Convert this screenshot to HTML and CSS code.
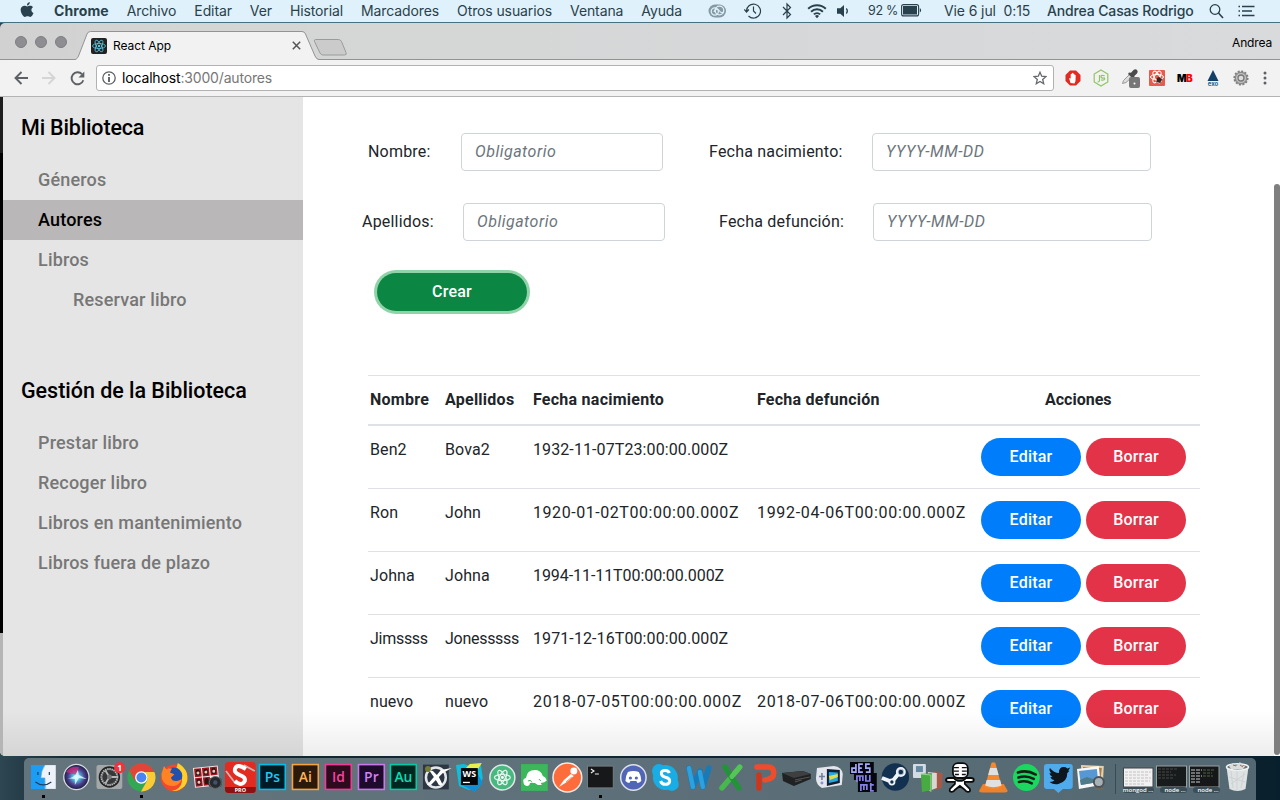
FILE: index.html
```html
<!DOCTYPE html>
<html lang="es">
<head>
<meta charset="utf-8">
<title>React App</title>
<link rel="stylesheet" href="styles.css">
</head>
<body>
<div class="desktop">
  <header class="menubar">
    <svg class="apple" width="14" height="16" viewBox="0 0 14 16"><path d="M9.8 0c.1 1.800-1.200 3.300-2.800 3.400C6.800 1.800 8.200.3 9.800 0zM7.200 4.500c.8 0 1.700-.8 3.100-.7 1 0 2 .5 2.700 1.400-2.400 1.500-2 4.700.5 5.700-.6 1.700-2 4-3.300 4-1 0-1.500-.6-2.700-.6s-1.700.6-2.600.6C3.100 15-.2 9.400.9 6.300 1.500 4.700 2.900 3.800 4.300 3.800c1.200 0 2 .7 2.900.7z" fill="#29414c"/></svg>
    <nav class="menus"><b>Chrome</b><span>Archivo</span><span>Editar</span><span>Ver</span><span>Historial</span><span>Marcadores</span><span>Otros usuarios</span><span>Ventana</span><span>Ayuda</span></nav>
    <div class="tray">
      <svg class="cloud" width="19" height="16" viewBox="0 0 19 16"><rect x=".5" y="1.500" width="17.500" height="13" rx="6.500" fill="#849aa4"/><g fill="none" stroke="#dff1fa" stroke-width="1.200"><circle cx="6.800" cy="8.500" r="3.600"/><circle cx="11.500" cy="7.500" r="4.300"/><path d="M6 9c1.500-4.500 4-3 5.500-1s2.500 2.200 3.500 1"/></g></svg>
      <svg class="clockback" width="18" height="18" viewBox="0 0 18 18"><path d="M2.500 9.500A7 7 0 1 1 4.500 14M9.500 4.500V9l2.500 2.500M.300 7.500 2.500 10l2.400-2.500" fill="none" stroke="#29414c" stroke-width="1.200"/></svg>
      <svg class="bt" width="10" height="18" viewBox="0 0 10 18"><path d="m1 5 7.500 7.500L5 16V2l3.500 3.500L1 13" fill="none" stroke="#29414c" stroke-width="1.200"/></svg>
      <svg class="wifi" width="20" height="16" viewBox="0 0 20 16"><g fill="none" stroke="#29414c" stroke-width="2"><path d="M1.200 5.800a12.500 12.500 0 0 1 17.600 0M4.100 8.700a8.500 8.500 0 0 1 11.800 0M6.900 11.400a4.500 4.500 0 0 1 6.200 0"/></g><path d="M10 15.300 8 13a3 3 0 0 1 4 0z" fill="#29414c"/></svg>
      <svg class="vol" width="12" height="14" viewBox="0 0 12 14"><path d="M0 4.300h3.300L7 1v12L3.300 9.700H0z" fill="#29414c"/><path d="M9.300 4.500a4 4 0 0 1 0 5" fill="none" stroke="#29414c" stroke-width="1.300"/></svg>
      <span class="pct">92 %</span>
      <svg class="battery" width="21" height="13" viewBox="0 0 21 13"><rect x=".6" y=".6" width="17" height="11.300" rx="2" fill="none" stroke="#29414c" stroke-width="1.100"/><rect x="2" y="2" width="14" height="8.500" fill="#29414c"/><path d="M18.800 4.200c1.700.5 1.700 3.600 0 4.200z" fill="#29414c"/></svg>
      <span class="clock">Vie 6 jul&nbsp; 0:15</span>
      <span class="user">Andrea Casas Rodrigo</span>
      <svg class="search" width="15" height="16" viewBox="0 0 15 16"><circle cx="6" cy="6.500" r="4.800" fill="none" stroke="#29414c" stroke-width="1.300"/><path d="m9.500 10 4.500 5" stroke="#29414c" stroke-width="1.600"/></svg>
      <svg class="list" width="17" height="12" viewBox="0 0 17 12"><path d="M4 1.500h12.500M4 6h10M4 10.500h12.500M.5 1.500H2M.5 6H2M.5 10.500H2" stroke="#29414c" stroke-width="1.700"/></svg>
    </div>
  </header>

  <section class="browser">
    <div class="tabstrip">
      <div class="lights"><i></i><i></i><i></i></div>
      <div class="tab">
        <svg class="tab-shape" width="246" height="29" viewBox="0 0 246 29"><path d="M0 28.500C2 28 2.500 27 3.500 25L12 3Q13 .5 15.500.5H227Q229.500.5 230.500 3L240 25q1.500 3.500 4 3.500V29H0z" fill="#f2f2f2"/><path d="M0 28.500C2 28 2.500 27 3.500 25L12 3Q13 .5 15.500.5H227Q229.500.5 230.500 3L240 25q1.500 3.500 4 3.500" fill="none" stroke="#939393"/></svg>
        <svg class="favicon" width="16" height="16" viewBox="0 0 16 16"><rect width="16" height="16" rx="2" fill="#222"/><g fill="none" stroke="#5ac8e6" stroke-width=".8"><ellipse cx="8" cy="8" rx="6.500" ry="2.500"/><ellipse cx="8" cy="8" rx="6.500" ry="2.500" transform="rotate(60 8 8)"/><ellipse cx="8" cy="8" rx="6.500" ry="2.500" transform="rotate(120 8 8)"/></g><circle cx="8" cy="8" r="1.200" fill="#5ac8e6"/></svg>
        <span class="tab-title">React App</span>
        <svg class="close" width="9" height="9" viewBox="0 0 9 9"><path d="m.8.8 7.400 7.400m0-7.400L.8 8.200" stroke="#555" stroke-width="1.500"/></svg>
      </div>
      <svg class="newtab" width="35" height="17" viewBox="0 0 35 17"><path d="M2.500.5h23q2 0 3 2l4.500 11q1 2.500-1.500 2.500H10q-2 0-3-2L1.500 2.500Q.800.500 2.500.5z" fill="#cbcbcb" stroke="#9a9a9a"/></svg>
      <span class="profile">Andrea</span>
    </div>
    <div class="toolbar">
      <svg width="14" height="14" viewBox="0 0 14 14"><path d="M14 7H1.500M7.500 1 1.500 7l6 6" fill="none" stroke="#5d6064" stroke-width="1.900"/></svg>
      <svg class="fwd" width="14" height="14" viewBox="0 0 14 14"><path d="M0 7h12.500M6.500 1l6 6-6 6" fill="none" stroke="#d5d5d5" stroke-width="1.900"/></svg>
      <svg class="reload" width="15" height="15" viewBox="0 0 15 15"><path d="M12 3.200a6 6 0 1 0 1.300 6" fill="none" stroke="#5d6064" stroke-width="1.900"/><path d="M14.300.5v6H8.500z" fill="#5d6064"/></svg>
      <div class="omnibox">
        <svg width="14" height="14" viewBox="0 0 14 14"><circle cx="7" cy="7" r="6.200" fill="none" stroke="#5d6064" stroke-width="1.300"/><path d="M7 3v1.800M7 6v5" stroke="#5d6064" stroke-width="1.900"/></svg>
        <span class="url"><b>localhost</b>:3000/autores</span>
        <svg class="star" width="14" height="14" viewBox="0 0 14 14"><path d="m7 1.200 1.700 4 4.300.4-3.300 2.800 1 4.300L7 10.400l-3.700 2.300 1-4.300L1 5.600l4.300-.4z" fill="none" stroke="#66696d" stroke-width="1.300"/></svg>
      </div>
      <div class="extensions">
        <svg width="16" height="16" viewBox="0 0 16 16"><path d="M5 .5h6L15.500 5v6L11 15.500H5L.5 11V5z" fill="#e32a22"/><path d="M5.500 13 4.200 8.500q.7-1 1.500.3V4.300q.7-.9 1.200 0V3.300q.7-.9 1.300 0v.7q.7-.8 1.200 0v1.100q.8-.8 1.300.3L10.500 11 9.500 13.500z" fill="#fff"/></svg>
        <svg width="16" height="18" viewBox="0 0 16 18"><path d="m8 1 6.800 4v8L8 17l-6.800-4V5z" fill="none" stroke="#8cc665" stroke-width="1.200"/><path d="M6.500 6v5.500q0 1.500-2 1.500M11.700 6.800Q8 5.500 8 7.500t3.500 1.500q1 2.500-3.500 2" fill="none" stroke="#8cc665" stroke-width="1.200"/></svg>
        <svg class="picker" width="19" height="20" viewBox="0 0 19 20"><path d="m1.500 15.500 1-3L9 6l2.500 2.500-6.500 6z" fill="#ddd" stroke="#999"/><path d="m8 4.500 2 .3L12.500 2q2-1.500 3.500 0t0 3.500L13.300 8l.4 2-1.500 1L7 6z" fill="#4b4b4b"/><rect x="8" y="9" width="11" height="11" rx="2" fill="#777"/><circle cx="13.500" cy="15.500" r="1" fill="#fff"/></svg>
        <svg width="16" height="16" viewBox="0 0 16 16"><rect width="16" height="16" rx="1" fill="#e65b4c"/><g fill="none" stroke="#fff"><ellipse cx="8" cy="7" rx="6.500" ry="2.600"/><ellipse cx="8" cy="7" rx="6.500" ry="2.600" transform="rotate(60 8 7)"/><ellipse cx="8" cy="7" rx="6.500" ry="2.600" transform="rotate(120 8 7)"/></g><path d="m8 8.500 3-1 1.500 2.500-2 2.500-2.500-1zM7 12l6-3M9 7l2.500 6" fill="#37231f" stroke="#37231f" stroke-width=".8"/></svg>
        <span class="mb">M<em>B</em></span>
        <svg width="16" height="18" viewBox="0 0 16 18"><path d="m8 1 5.500 11h-11z" fill="#153e64"/><text x="8" y="17" text-anchor="middle" class="exo">exo</text></svg>
        <svg width="16" height="16" viewBox="0 0 16 16"><circle cx="8" cy="8" r="6.600" fill="#aaa" stroke="#808080" stroke-width="2" stroke-dasharray="2 1.450"/><circle cx="8" cy="8" r="5.500" fill="#c4c4c4" stroke="#777" stroke-width=".7"/><circle cx="8" cy="8" r="3" fill="#ddd" stroke="#777" stroke-width="1.300"/></svg>
      </div>
      <svg class="dots" width="4" height="14" viewBox="0 0 4 14"><g fill="#5d6064"><circle cx="2" cy="2" r="1.500"/><circle cx="2" cy="7" r="1.500"/><circle cx="2" cy="12" r="1.500"/></g></svg>
    </div>

    <div class="page">
      <div class="behind"></div>
      <aside class="sidebar">
        <h2>Mi Biblioteca</h2>
        <ul><li>Géneros</li><li class="active">Autores</li><li>Libros</li><li class="sub">Reservar libro</li></ul>
        <h2 class="second">Gestión de la Biblioteca</h2>
        <ul><li>Prestar libro</li><li>Recoger libro</li><li>Libros en mantenimiento</li><li>Libros fuera de plazo</li></ul>
      </aside>
      <main class="content">
        <form class="form">
          <div class="row row-1"><label>Nombre:</label><input type="text" placeholder="Obligatorio"><label>Fecha nacimiento:</label><input class="date" type="text" placeholder="YYYY-MM-DD"></div>
          <div class="row row-2"><label>Apellidos:</label><input type="text" placeholder="Obligatorio"><label>Fecha defunción:</label><input class="date" type="text" placeholder="YYYY-MM-DD"></div>
          <button type="button" class="btn create">Crear</button>
        </form>
        <div class="table">
          <div class="tr th"><span>Nombre</span><span>Apellidos</span><span>Fecha nacimiento</span><span>Fecha defunción</span><span class="acc">Acciones</span></div>
          <div class="tr"><span>Ben2</span><span>Bova2</span><span>1932-11-07T23:00:00.000Z</span><span></span><span class="actions"><button class="btn edit">Editar</button><button class="btn delete">Borrar</button></span></div>
          <div class="tr"><span>Ron</span><span>John</span><span class="wide">1920-01-02T00:00:00.000Z</span><span class="wider">1992-04-06T00:00:00.000Z</span><span class="actions"><button class="btn edit">Editar</button><button class="btn delete">Borrar</button></span></div>
          <div class="tr"><span>Johna</span><span>Johna</span><span class="narrow">1994-11-11T00:00:00.000Z</span><span></span><span class="actions"><button class="btn edit">Editar</button><button class="btn delete">Borrar</button></span></div>
          <div class="tr"><span class="narrower">Jimssss</span><span class="narrower">Jonesssss</span><span>1971-12-16T00:00:00.000Z</span><span></span><span class="actions"><button class="btn edit">Editar</button><button class="btn delete">Borrar</button></span></div>
          <div class="tr"><span>nuevo</span><span>nuevo</span><span class="wider">2018-07-05T00:00:00.000Z</span><span class="wider">2018-07-06T00:00:00.000Z</span><span class="actions"><button class="btn edit">Editar</button><button class="btn delete">Borrar</button></span></div>
        </div>
      </main>
      <div class="scrollbar"></div>
      <div class="page-shade"></div>
    </div>
  </section>

  <footer class="dock">
    <svg class="app run" viewBox="0 0 33 34"><path d="M4 5h25v24H4z" fill="#eef3fa"/><path d="M4 5h14q-4 6-4 13h4v11H4z" fill="#1b9df5"/><path d="M18 5q-4 6-4 13h4q0 6 1 11" fill="none" stroke="#5b9fce" stroke-width=".7"/><path d="M8.500 22q8 6 16 0M11 12v3M22.500 12v3" fill="none" stroke="#1d3d5c" stroke-width="1.200"/></svg>
    <svg class="app" viewBox="0 0 33 34"><defs><radialGradient id="siri"><stop offset="0" stop-color="#fff"/><stop offset=".3" stop-color="#52b6d8"/><stop offset=".65" stop-color="#4b3f8e"/><stop offset="1" stop-color="#191c3a"/></radialGradient></defs><circle cx="16.500" cy="17" r="12.700" fill="url(#siri)" stroke="#d9dbe2" stroke-width="1.300"/><path d="M6 12q5-7 13-5l-2 8z" fill="#d92b7b" opacity=".7"/><path d="M5 18q8 1 11-4l2-4 1 5 8 4-8-1-4 7 0-6z" fill="#d7fbff" opacity=".85"/></svg>
    <svg class="app" viewBox="0 0 33 34"><rect x="3.500" y="5" width="26" height="24" rx="2" fill="#a5a8a9"/><circle cx="16.500" cy="17" r="10" fill="#353738" stroke="#222" stroke-width="1.500"/><circle cx="16.500" cy="17" r="8" fill="none" stroke="#b5b7b8" stroke-width="2" stroke-dasharray="1.500 .7"/><path d="M16.500 17H24M16.500 17l-4-6.500M16.500 17l-4 6.500" stroke="#b5b7b8" stroke-width="1.800"/><circle cx="16.500" cy="17" r="2.500" fill="#777"/><circle cx="26.800" cy="7.500" r="5.600" fill="#f0333c"/><text class="glyph" x="26.800" y="10.700" font-size="8.500" fill="#fff">1</text></svg>
    <svg class="app run" viewBox="0 0 33 34"><circle cx="16.500" cy="17.500" r="14" fill="#33a853"/><path d="M4.400 10.500A14 14 0 0 1 29.500 12H16.500L10 21z" fill="#e04538"/><path d="M29.600 12a14 14 0 0 1-13.500 19.500l6-10.500q2-5-2-9z" fill="#fbcb35"/><circle cx="16.500" cy="17.500" r="6.300" fill="#fff"/><circle cx="16.500" cy="17.500" r="5" fill="#4786ee"/></svg>
    <svg class="app" viewBox="0 0 33 34"><circle cx="16.500" cy="18" r="13.500" fill="#f4472b"/><path d="M20 3q7 4 9 10 2 8-2 13-6 6-13 5 9-2 10-9 2-8-6-12z" fill="#ffcf2c"/><circle cx="16" cy="16" r="8.500" fill="#2251ad"/><path d="M3.500 14 6 6l2.500 3.500q3-2 5.500-1l-2 4q3 1 4.500 2l-3.500 3q1 4 6 3.500 3-.5 5-2-2 6-8 7-9 1-12-7z" fill="#ff8324"/></svg>
    <svg class="app" viewBox="0 0 33 34"><g transform="rotate(-6 16 17)"><rect x="3" y="6.500" width="25" height="20" fill="#f4e8e8"/><path d="M4 7.500h7v8.500H4zm8 0h7v8.500h-7zm8 0h7v8.500h-7zM4 17h7v8.500H4zm8 0h7v8.500h-7z" fill="#a4151f"/><path d="M5.500 14.500q-1-6 2-6t2 6zm8 0q-1-6 2-6t2 6zm8 0q-1-6 2-6t2 6zM5.500 24q-1-6 2-6t2 6zm8 0q-1-6 2-6t2 6z" fill="#2a1516"/><circle cx="7.500" cy="12" r="1.500" fill="#f0c4ae"/><circle cx="15.500" cy="12" r="1.500" fill="#f0c4ae"/><circle cx="23.500" cy="12" r="1.500" fill="#f0c4ae"/><circle cx="7.500" cy="21.500" r="1.500" fill="#f0c4ae"/></g><rect x="17.500" y="18" width="13.500" height="9" rx="3" fill="#373b3f"/><circle cx="24.500" cy="22.500" r="6" fill="#252a2e" stroke="#63696d"/><circle cx="24.500" cy="22.500" r="2.200" fill="#47506b"/></svg>
    <svg class="app" viewBox="0 0 33 34"><rect x="1" y="2" width="31" height="31" rx="3.500" fill="#e32b22"/><path d="M1 27h31v3q0 3-3.500 3h-24Q1 33 1 29z" fill="#8d1113"/><path d="m20 5 11 6M2 11l10 13" stroke="#c3b7b5" stroke-width="1.800"/><path d="M22 9q-9-6-11 0-1 4 5 6t5 6q-3 6-10 0" fill="none" stroke="#fff" stroke-width="4"/><text class="glyph" x="16.500" y="32" font-size="5.500" fill="#fff">PRO</text></svg>
    <svg class="app" viewBox="0 0 33 34"><rect x="3.500" y="4.500" width="26" height="25" fill="#001a24" stroke="#00bfe8" stroke-width="1.600"/><text class="glyph adobe" x="16.500" y="22" fill="#1fc9f2">Ps</text></svg>
    <svg class="app" viewBox="0 0 33 34"><rect x="3.500" y="4.500" width="26" height="25" fill="#2b1a0b" stroke="#f4a340" stroke-width="1.600"/><text class="glyph adobe" x="16.500" y="22" fill="#fbb45a">Ai</text></svg>
    <svg class="app" viewBox="0 0 33 34"><rect x="3.500" y="4.500" width="26" height="25" fill="#2d0b1c" stroke="#ef3c96" stroke-width="1.600"/><text class="glyph adobe" x="16.500" y="22" fill="#f643a3">Id</text></svg>
    <svg class="app" viewBox="0 0 33 34"><rect x="3.500" y="4.500" width="26" height="25" fill="#1e0a2b" stroke="#c878ec" stroke-width="1.600"/><text class="glyph adobe" x="16.500" y="22" fill="#d381f5">Pr</text></svg>
    <svg class="app" viewBox="0 0 33 34"><rect x="3.500" y="4.500" width="26" height="25" fill="#012620" stroke="#00cda4" stroke-width="1.600"/><text class="glyph adobe" x="16.500" y="22" fill="#0bdcb4">Au</text></svg>
    <svg class="app" viewBox="0 0 33 34"><rect x="3" y="4.500" width="26" height="25" fill="#2c3743"/><circle cx="16" cy="17.500" r="10" fill="none" stroke="#e4e7e9" stroke-width="2.500"/><path d="m9 10 4 1 4 4 4-5 11-2-9 5-4 4 4 8h-4l-3-5-5 5H7l7-8z" fill="#fff"/><circle cx="8" cy="9" r="3" fill="#747b37"/></svg>
    <svg class="app" viewBox="0 0 33 34"><path d="m3 5 8-1 6 2 11-2 2 14-4 10-10 2-10-4z" fill="#10bddb"/><path d="m17 4 12-1-5 8-11-3z" fill="#e9ee4d"/><path d="m7 24 18-10 5 9-8 9z" fill="#118fd5"/><rect x="8" y="8" width="17" height="17" fill="#050608"/><text class="glyph" x="16.500" y="17.500" font-size="9" fill="#fff">WS</text><path d="M10 22.500h7" stroke="#fff" stroke-width="1.300"/></svg>
    <svg class="app" viewBox="0 0 33 34"><circle cx="16.500" cy="17.500" r="12.600" fill="#48b880" stroke="#dfe9e5" stroke-width="1.500"/><g fill="none" stroke="#e3f5ec" stroke-width="1.200"><ellipse cx="16.500" cy="17.500" rx="8" ry="3"/><ellipse cx="16.500" cy="17.500" rx="8" ry="3" transform="rotate(62 16.500 17.500)"/><ellipse cx="16.500" cy="17.500" rx="8" ry="3" transform="rotate(118 16.500 17.500)"/></g><circle cx="16.500" cy="17.500" r="1.500" fill="#fff"/></svg>
    <svg class="app" viewBox="0 0 33 34"><rect x="3" y="4" width="27" height="27" fill="#3cb75b"/><path d="M5.500 22q-1-3 2.500-4 1-8 9-8 6 0 8 6 3 1 4 4.500-2 2.500-6 2.500l1 2H20l-3-2h-5q0 3-3 3-3.500-.5-3.500-4z" fill="#fff"/><path d="M10 21q3-2 4 1.500M21 19l2 2" fill="none" stroke="#3cb75b"/></svg>
    <svg class="app" viewBox="0 0 33 34"><circle cx="16.500" cy="17.500" r="14.500" fill="#ff6c3c" stroke="#f4ece8" stroke-width="1.500"/><path d="m8 27 5-7 7-6 3 2-7 6z" fill="#fff"/><path d="m12 20 8-7m-5 9 6-5" stroke="#ff6c3c" stroke-width=".8"/><circle cx="23" cy="11" r="3.500" fill="#fff"/></svg>
    <svg class="app run" viewBox="0 0 33 34"><rect x="3.500" y="6" width="26" height="22" fill="#171819" stroke="#777d80"/><path d="m7 9 3 2-3 2M11 14h4" fill="none" stroke="#eee" stroke-width="1.200"/></svg>
    <svg class="app" viewBox="0 0 33 34"><circle cx="16.500" cy="17.500" r="12.800" fill="#5266b8" stroke="#dce0ed" stroke-width="1.500"/><path d="M11 12q5.500-2 11 0 2.500 4 2.500 9-2 2-4 2l-1-2h-6l-1 2q-2 0-4-2 0-5 2.500-9z" fill="#fff"/><circle cx="13.500" cy="18" r="1.600" fill="#5266b8"/><circle cx="19.500" cy="18" r="1.600" fill="#5266b8"/></svg>
    <svg class="app" viewBox="0 0 33 34"><circle cx="16.500" cy="17.500" r="12.500" fill="#18aee5"/><circle cx="10" cy="11" r="7" fill="#18aee5"/><circle cx="23" cy="24" r="7" fill="#18aee5"/><path d="M20.500 13q-1-3-5-2.500-3.500.5-3 3.300t4 3.400q4.500 1 4.300 4-.5 3.200-4.300 3.200t-4.800-3.400" fill="none" stroke="#fff" stroke-width="3"/></svg>
    <svg class="app" viewBox="0 0 33 34"><path d="m7 8 4 19 7-16 3 16 6-19" fill="none" stroke="#177ab9" stroke-width="5.500" stroke-linejoin="round" stroke-linecap="round"/><path d="m7 8 4 19M18 12l3 15" stroke="#2ba1df" stroke-width="4.500" stroke-linecap="round"/></svg>
    <svg class="app" viewBox="0 0 33 34"><path d="M25 7 7 28" stroke="#47b84c" stroke-width="5.500" stroke-linecap="round"/><path d="m10 7 14 21" stroke="#239339" stroke-width="5.500" stroke-linecap="round"/><path d="m25 7-8 9.500" stroke="#55c557" stroke-width="5" stroke-linecap="round"/></svg>
    <svg class="app" viewBox="0 0 33 34"><path d="M9 7h11q6 0 6 6t-9 7" fill="none" stroke="#ee4c2c" stroke-width="5.500" stroke-linecap="round"/><path d="M11 15v13" stroke="#cf351c" stroke-width="5.500" stroke-linecap="round"/></svg>
    <svg class="app" viewBox="0 0 33 34"><path d="m2 13 21-2 8 3v5L14 26 3 21z" fill="#1f2122"/><path d="m2 13 21-2 8 3-17 4z" fill="#3d3f40"/><path d="m15 20 15-3M15 22l7-2" stroke="#555"/></svg>
    <svg class="app" viewBox="0 0 33 34"><path d="m4 8 17-2q8 1 9 8l-1 11-20 3q-6-3-6-10z" fill="#e4e6ed"/><path d="m14 9 13 1v13l-13 3z" fill="#151d30"/><path d="m16 12 9 .5V21l-9 2z" fill="#22a9e2"/><path d="m16 16 9-2v3l-8 3z" fill="#e7d94f"/><path d="M9 13v7M6 16.500h6" stroke="#777e99" stroke-width="1.600"/><circle cx="9" cy="23" r="1.500" fill="#8992d0"/></svg>
    <svg class="app" viewBox="0 0 33 34"><path d="M4 2h24v11h3v19H12V20H8v-6H4z" fill="#06060d"/><g fill="none" stroke="#a6a9f5" stroke-width="1.700"><path d="M10 4v8H6V8h4M17 4h-4v8h4M13 8h3M24 4h-4v4h4v4h-4"/><path d="M11 22v-6h3v5-5h3v5M20 15v6h4v-6M15 31v-6h3v5-5h3v5M25 23v8h3M24 25h4" stroke="#8581ea"/></g></svg>
    <svg class="app" viewBox="0 0 33 34"><circle cx="16.500" cy="17" r="13.800" fill="#123050"/><path d="m3 18 10 4 8-10" fill="none" stroke="#eef3f8" stroke-width="4"/><circle cx="22" cy="12" r="5" fill="#eef3f8"/><circle cx="22" cy="12" r="2.800" fill="#123050" stroke="#b7c7d6"/><circle cx="13" cy="22" r="3.500" fill="#eef3f8"/><circle cx="13" cy="22" r="1.700" fill="#123050"/></svg>
    <svg class="app" viewBox="0 0 33 34"><rect x="2" y="4" width="13" height="14" rx="1" fill="#d2dce4"/><path d="M5 6h7v6H5z" fill="#6389a5"/><path d="m23 12 9 1-1 15-8 2z" fill="#a75846"/><path d="m17 12 9 1v15l-8 3z" fill="#d7d8d4"/><path d="m10 14 11-1v17l-10 2z" fill="#47aa42"/><path d="m10 14 10 1v17" fill="none" stroke="#9ad28f"/></svg>
    <svg class="app" viewBox="0 0 33 34"><g stroke="#0b0b0b" stroke-width="1.800" fill="#fff"><path d="M5 18q-3 0-3 2t3 2h6v2l-5 5q-1 3 2 3 2 0 3-2l5-4 5 4q1 2 3 2 3 0 2-3l-5-5v-2h6q3 0 3-2t-3-2h-5q-2 3-6 3t-6-3z"/><rect x="9" y="3" width="15" height="15" rx="5"/></g><path d="M10 7.500h5m3 0h5m-13 3.500h5m3 0h5m-12 3.500h4m3 0h4" stroke="#111" stroke-width="1.300"/></svg>
    <svg class="app" viewBox="0 0 33 34"><path d="m6 24-4 7q0 1.500 3 1.500h23q3 0 3-1.500l-4-7z" fill="#f0812b"/><path d="M14.500 3q2-1.500 4 0L25 27q-8.500 4-17 0z" fill="#f4892f"/><path d="M13.200 8h6.600l2 7H11.200zM9.700 20h13.600l1.500 5.500q-8.300 3.500-16.600 0z" fill="#dfe0df"/></svg>
    <svg class="app" viewBox="0 0 33 34"><circle cx="16.500" cy="17.500" r="13.500" fill="#1bd760"/><path d="M8 12.500q9-3 18 2M8.500 17.500q8-2.500 15.500 1.500M9 22q7-2 13 1.500" fill="none" stroke="#122117" stroke-width="2.600" stroke-linecap="round"/></svg>
    <svg class="app" viewBox="0 0 33 34"><path d="M5 4h23q3 0 3 3v19q0 3-3 3h-7l-4.500 4-4.500-4H5q-3 0-3-3V7q0-3 3-3z" fill="#50abed"/><path d="M8 8q4 5 9 5 0-6 5-6 2 0 3.500 1.500l3-1-2 3 1 .5-2 2q0 9-9 11-5 1-9-2 4 0 5-2-3 0-4-3h2q-3-2-3-4l2 .5q-3-3-1.500-5.500z" fill="#0e161e"/></svg>
    <svg class="app" viewBox="0 0 33 34"><path d="m6 5 23 1-1 20-21-2z" fill="#e3d1ad"/><path d="m8 7 19 1-1 9-17-1z" fill="#a57b4b"/><path d="m2 9 22-3 2 19-22 4z" fill="#f6f7f8"/><path d="m4 11 18-2 1.500 13-17.500 3z" fill="#5798d4"/><path d="m5 20 7-3 6 2 5-2 .5 5-17.500 3z" fill="#4f7a8a"/><circle cx="24" cy="22" r="5" fill="#a7b1b5" stroke="#4d5355" stroke-width="2"/><path d="M20 28h9v2h-9z" fill="#6d695f"/></svg>
    <i class="sep"></i>
    <svg class="mini" viewBox="0 0 33 34"><rect x="1.500" y="8" width="29.500" height="19" fill="#f2f0f0" stroke="#3c4548"/><path d="M3 12h26M3 15h24M3 18h26M3 21h25M3 24h20" stroke="#c4c4c4" stroke-dasharray="3 1"/><rect x="1" y="27" width="31" height="6" rx="3" fill="#3b4e58"/><text class="glyph cap" x="16" y="32">mongod ...</text></svg>
    <svg class="mini" viewBox="0 0 33 34"><rect x="1.500" y="6" width="30" height="21" fill="#181b1c" stroke="#99a0a1"/><path d="M3 9h20M3 12h13M3 15h18M3 18h15" stroke="#555" stroke-width=".8" stroke-dasharray="3 1"/><rect x="5" y="27" width="27" height="6" rx="3" fill="#3b4e58"/><text class="glyph cap" x="20" y="32">node ...</text></svg>
    <svg class="mini" viewBox="0 0 33 34"><rect x="1.500" y="6" width="29.500" height="21" fill="#151718" stroke="#99a0a1"/><path d="M3 10h11M3 13h9M3 16h11M3 19h9M3 22h10" stroke="#ccc" stroke-dasharray="4 1"/><path d="M15 10h12M15 13h9M15 16h10" stroke="#536346" stroke-dasharray="3 1"/><rect x="5" y="27" width="27" height="6" rx="3" fill="#3b4e58"/><text class="glyph cap" x="20" y="32">node ...</text></svg>
    <svg class="mini" viewBox="0 0 33 34"><path d="M5.500 7h22l-3 22q-8 4-16 0z" fill="#dfe2e3"/><path d="m10 11 2 17m4-17v19m7-18-3 16M8 17l16 5M24 14 10 24" stroke="#cdd2d4"/><ellipse cx="16.500" cy="7" rx="11" ry="3.300" fill="#6a7474" stroke="#f1f3f3" stroke-width="1.500"/><path d="m8 6 4-3 3 3 4-4 3 4 3-1-3 4H10z" fill="#d9dcdc"/><path d="m12 5 3 1M19 5l3 2" stroke="#b66342"/></svg>
  </footer>
</div>
</body>
</html>
```

FILE: styles.css
```css
* { box-sizing: border-box; }
body { margin: 0; }
svg { display: block; flex: none; }
.desktop {
  width: 1280px; height: 800px; overflow: hidden;
  display: flex; flex-direction: column;
  background: linear-gradient(90deg, #2d4651 0, #142833 6%, #10212c 95%, #08202d 100%);
}

/* System menu bar */
.menubar {
  height: 23px; flex: none; display: flex; align-items: center;
  padding: 0 25px 1px 20px;
  background: #dff1fa; border-bottom: 1px solid #49707f;
  font: 14px Inter, sans-serif; color: #29414c; letter-spacing: -.11px; white-space: nowrap;
}
.apple { margin-top: -1px; }
.menus { display: flex; gap: 18px; margin-left: 20px; }
.menus b { font-weight: 700; letter-spacing: .1px; }
.tray { display: flex; align-items: center; margin-left: auto; }
.cloud { margin-right: 17px; }
.clockback { margin-right: 20px; }
.bt { margin-right: 15px; }
.wifi { margin-right: 10px; }
.vol { margin-right: 19px; }
.pct { font-size: 12.500px; width: 29px; letter-spacing: -.3px; }
.battery { margin: 0 22px 0 4px; }
.clock { width: 86px; margin-right: 17px; }
.user { width: 147px; font-weight: 500; letter-spacing: -.14px; margin-right: 15px; }
.search { margin-right: 14px; }

/* Browser chrome */
.browser { height: 733px; flex: none; overflow: hidden; border-radius: 5px 0 0 5px; }
.tabstrip {
  height: 37px; display: flex; align-items: flex-start;
  background: linear-gradient(90deg, #d1d1d1 0, #d4d5d5 15%, #d8dadb 100%);
  border-bottom: 1px solid #939393;
}
.lights { display: flex; gap: 8px; padding: 13px 0 0 15px; width: 75px; }
.lights i { width: 12px; height: 12px; border-radius: 50%; background: #8e8d91; border: 1px solid #7e7d81; }
.tab { position: relative; width: 239px; height: 29px; margin-top: 8px; display: flex; align-items: center; padding-left: 16px; }
.tab-shape { position: absolute; left: 0; top: 0; }
.favicon, .tab-title, .close { position: relative; }
.tab-title { margin-left: 6px; font: 12px Inter, sans-serif; letter-spacing: -.06px; color: #000; }
.close { margin-left: 121px; }
.newtab { margin: 16px 0 0 -1px; }
.profile { margin: 12px 8px 0 auto; font: 12px Inter, sans-serif; letter-spacing: -.15px; color: #000; }
.toolbar {
  height: 37px; display: flex; align-items: center; padding: 0 13px 0 14px;
  background: #f2f2f2; border-bottom: 1px solid #b3b3b3;
}
.fwd { margin-left: 14px; }
.reload { margin-left: 14px; }
.omnibox {
  width: 958px; height: 26px; margin-left: 11px; padding: 0 6px 0 5px;
  display: flex; align-items: center; flex: none;
  border: 1px solid #b2b2b2; border-radius: 3px; background: #fff;
}
.url { margin: 0 0 2px 6px; font: 14px Inter, sans-serif; color: #777; letter-spacing: -.16px; }
.url b { font-weight: 400; color: #000; }
.star { margin-left: auto; }
.extensions { display: flex; align-items: center; gap: 12px; margin-left: 11px; }
.picker { margin: 0 -3px 0 0; }
.mb { width: 16px; font: 900 10px/16px Inter, sans-serif; letter-spacing: -.6px; color: #000; }
.mb em { font-style: normal; color: #f00; }
.exo { font: 700 6px Inter, sans-serif; fill: #156592; }
.dots { margin-left: auto; }

/* Web page */
.page { position: relative; height: 659px; display: flex; background: #fff; font: 16px Roboto, sans-serif; color: #212529; }
.behind { width: 3px; background: linear-gradient(#1d1d1d 0 56px, #000 56px 536px, #b5b5b5 536px); }
.sidebar { width: 300px; background: #e5e5e5; padding-top: 14px; }
h2 { margin: 0; padding-left: 18px; font-size: 21.500px; line-height: 34px; font-weight: 500; letter-spacing: -.17px; color: #000; }
h2.second { margin-top: 54px; letter-spacing: -.03px; }
ul { margin: 0; padding: 15px 0 0; list-style: none; }
li { height: 40px; padding-left: 35px; font-size: 18px; line-height: 40px; font-weight: 500; letter-spacing: .17px; color: #777; }
li.active { background: #b9b7b7; color: #000; }
li.sub { padding-left: 70px; }
.content { flex: 1; padding: 36px 0 0 65px; }
.form { display: flex; flex-direction: column; align-items: flex-start; height: 242px; }
.row { display: grid; align-items: center; height: 38px; margin-bottom: 32px; letter-spacing: .2px; }
.row-1 { grid-template-columns: 93px 202px 46px 163px 279px; }
.row-2 { grid-template-columns: 101px 202px 54px 154px 279px; margin-left: -6px; }
.row label { padding-bottom: 2px; }
.row label:nth-of-type(2) { grid-column: 4; }
.row .date { grid-column: 5; }
.row input {
  width: 100%; height: 38px; padding: 0 13px 1px;
  border: 1px solid #ced4da; border-radius: 4px; background: #fff;
  font: 16px Roboto, sans-serif; letter-spacing: .5px; color: #495057;
}
.row input::placeholder { color: #6c757d; font-style: italic; opacity: 1; }
.btn {
  width: 100px; height: 38px; border: 0; border-radius: 19px; padding: 0 0 1px;
  font: 500 16px Roboto, sans-serif; letter-spacing: .2px; color: #fff;
}
.create { width: 150px; margin-left: 9px; background: #0c8743; box-shadow: 0 0 0 3px #90d3a8; }
.edit { background: #007dfb; }
.delete { background: #e23348; }
.table { width: 832px; }
.tr {
  height: 63px; display: grid; grid-template-columns: 75px 88px 224px 224px 219px; padding: 12px 0 0 2px;
  border-top: 1px solid #dee2e6; line-height: 24px; letter-spacing: .1px; white-space: nowrap;
}
.th { height: 49px; font-weight: 700; letter-spacing: .25px; }
.th + .tr { height: 64px; border-top-width: 2px; }
.acc { padding-left: 64px; letter-spacing: 0; }
.actions { display: flex; gap: 5px; }
.wide { letter-spacing: .55px; }
.wider { letter-spacing: .67px; }
.narrow { letter-spacing: -.07px; }
.narrower { letter-spacing: -.28px; }
.scrollbar { width: 6px; height: 571px; margin-top: 87px; background: #7f7f7f; border-radius: 3px; }
.page-shade { position: absolute; left: 3px; right: 6px; bottom: 0; height: 45px; background: linear-gradient(rgba(0,0,0,0), rgba(0,0,0,.07)); }

/* Dock */
.dock {
  width: 1232px; height: 42px; margin: 2px 0 0 24px; padding: 2px 0 0 3px;
  display: flex; align-items: flex-start; border-radius: 5px 5px 0 0;
  background: linear-gradient(90deg, #64747c, #5d7079 50%, #536872);
}
.app { width: 32.750px; height: 34px; }
.run { height: 40px; padding-bottom: 6px; background: radial-gradient(circle at 50% 36.500px, #000 1.500px, transparent 2px); }
.mini { width: 33px; height: 34px; }
.sep { width: 1px; height: 30px; margin: 4px 6px 0 7px; background: #3a4c55; }
.glyph { font-family: "Open Sans", sans-serif; font-weight: 700; text-anchor: middle; }
.adobe { font-size: 14px; font-weight: 600; }
.cap { font-size: 6px; font-weight: 600; fill: #fff; }
```
